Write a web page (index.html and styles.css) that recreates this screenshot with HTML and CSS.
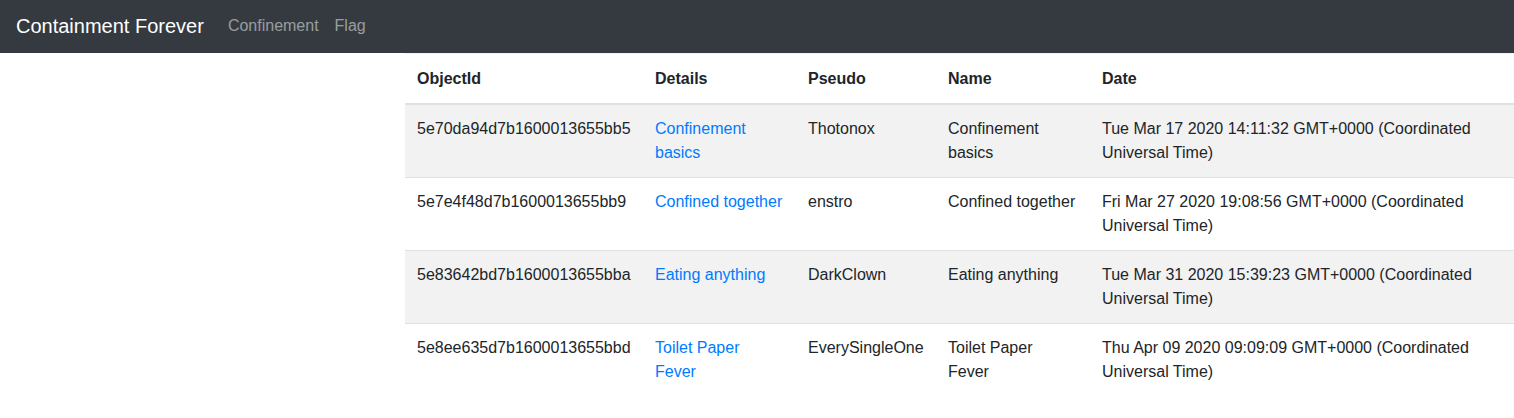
FILE: index.html
```html
<!DOCTYPE html>
<html>
<head>
<meta charset="utf-8">
<link rel="stylesheet" href="styles.css">
</head>
<body>
<nav class="navbar">
  <a class="brand" href="#">Containment Forever</a>
  <a class="nav-link" href="#">Confinement</a>
  <a class="nav-link" href="#">Flag</a>
</nav>
<main class="content">
  <table class="table">
    <colgroup>
      <col class="c-id"><col class="c-details"><col class="c-pseudo"><col class="c-name"><col class="c-date">
    </colgroup>
    <thead>
      <tr><th>ObjectId</th><th>Details</th><th>Pseudo</th><th>Name</th><th>Date</th></tr>
    </thead>
    <tbody>
      <tr>
        <td>5e70da94d7b1600013655bb5</td>
        <td><a href="#">Confinement basics</a></td>
        <td>Thotonox</td>
        <td class="name">Confinement basics</td>
        <td>Tue Mar 17 2020 14:11:32 GMT+0000 (Coordinated Universal Time)</td>
      </tr>
      <tr>
        <td>5e7e4f48d7b1600013655bb9</td>
        <td><a href="#">Confined together</a></td>
        <td>enstro</td>
        <td class="name">Confined together</td>
        <td>Fri Mar 27 2020 19:08:56 GMT+0000 (Coordinated Universal Time)</td>
      </tr>
      <tr>
        <td>5e83642bd7b1600013655bba</td>
        <td><a href="#">Eating anything</a></td>
        <td>DarkClown</td>
        <td class="name">Eating anything</td>
        <td>Tue Mar 31 2020 15:39:23 GMT+0000 (Coordinated Universal Time)</td>
      </tr>
      <tr>
        <td>5e8ee635d7b1600013655bbd</td>
        <td><a href="#">Toilet Paper Fever</a></td>
        <td>EverySingleOne</td>
        <td class="name">Toilet Paper Fever</td>
        <td>Thu Apr 09 2020 09:09:09 GMT+0000 (Coordinated Universal Time)</td>
      </tr>
    </tbody>
  </table>
</main>
</body>
</html>
```

FILE: styles.css
```css
* { box-sizing: border-box; }
html, body {
  margin: 0;
  padding: 0;
  overflow: hidden;
}
body {
  font-family: "Liberation Sans", Arial, sans-serif;
  font-size: 16px;
  line-height: 1.5;
  color: #212529;
  background: #fff;
}
a { text-decoration: none; }

.navbar {
  display: flex;
  align-items: center;
  height: 53px;
  padding: 0 16px 2px;
  background: #343a40;
}
.brand {
  color: #fff;
  font-size: 20px;
  line-height: 30px;
  margin-right: 16px;
}
.nav-link {
  color: rgba(255, 255, 255, 0.5);
  padding: 0 8px;
  line-height: 24px;
}

.content {
  padding-left: 405px;
}
.table {
  width: 1109px;
  table-layout: fixed;
  border-collapse: collapse;
}
.c-id { width: 238px; }
.c-details { width: 153px; }
.c-pseudo { width: 140px; }
.c-name { width: 154px; }
.c-date { width: 424px; }

.table th,
.table td {
  padding: 12px;
  text-align: left;
  vertical-align: top;
}
.table th {
  font-weight: bold;
  padding-top: 13px;
  border-top: 1px solid #eef0f2;
  border-bottom: 2px solid #dee2e6;
}
.table td {
  border-top: 1px solid #dee2e6;
}
.table td.name {
  padding-right: 14px;
}
.table tbody tr:first-child td { border-top: 0; }
.table tbody tr:nth-child(odd) {
  background: rgba(0, 0, 0, 0.05);
}
.table a { color: #007bff; }
```
